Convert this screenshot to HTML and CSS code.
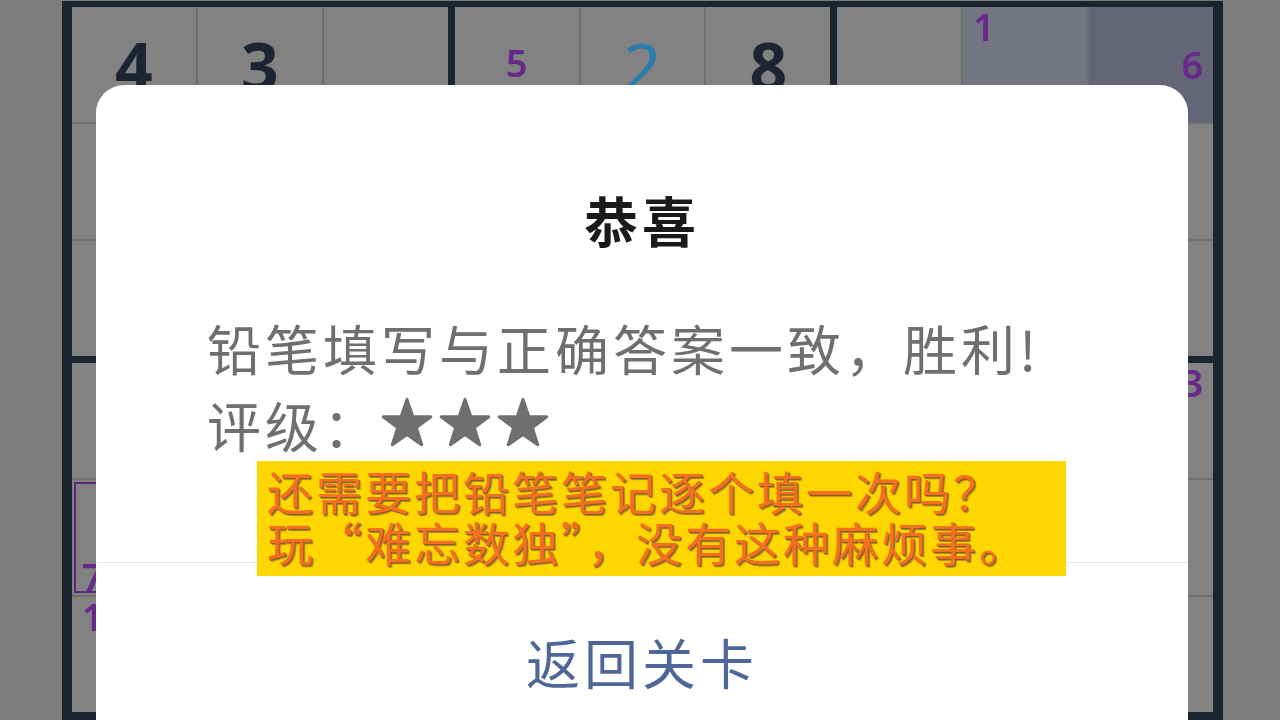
FILE: index.html
```html
<!DOCTYPE html>
<html lang="zh-CN">
<head>
    <meta charset="utf-8">
    <title>恭喜</title>
    <link rel="stylesheet" href="styles.css">
</head>
<body>
    <div class="board">
        <!-- 第一行宫 -->
        <div class="box">
            <div class="cell"><span class="num">4</span></div>
            <div class="cell"><span class="num">3</span></div>
            <div class="cell"></div>
            <div class="cell"></div>
            <div class="cell"></div>
            <div class="cell"></div>
            <div class="cell"></div>
            <div class="cell"></div>
            <div class="cell"></div>
        </div>
        <div class="box">
            <div class="cell"><div class="pencil"><span class="n5">5</span></div></div>
            <div class="cell"><span class="num user">2</span></div>
            <div class="cell"><span class="num">8</span></div>
            <div class="cell"></div>
            <div class="cell"></div>
            <div class="cell"></div>
            <div class="cell"></div>
            <div class="cell"></div>
            <div class="cell"></div>
        </div>
        <div class="box">
            <div class="cell"></div>
            <div class="cell same"><div class="pencil"><span class="n1">1</span></div></div>
            <div class="cell active"><div class="pencil"><span class="n6">6</span></div></div>
            <div class="cell"></div>
            <div class="cell"></div>
            <div class="cell"></div>
            <div class="cell"></div>
            <div class="cell"></div>
            <div class="cell"></div>
        </div>
        <!-- 第二行宫 -->
        <div class="box">
            <div class="cell"></div>
            <div class="cell"></div>
            <div class="cell"></div>
            <div class="cell marked"><div class="pencil"><span class="n7">7</span></div></div>
            <div class="cell"></div>
            <div class="cell"></div>
            <div class="cell"><div class="pencil"><span class="n1">1</span></div></div>
            <div class="cell"></div>
            <div class="cell"></div>
        </div>
        <div class="box">
            <div class="cell"></div>
            <div class="cell"></div>
            <div class="cell"></div>
            <div class="cell"></div>
            <div class="cell"></div>
            <div class="cell"></div>
            <div class="cell"></div>
            <div class="cell"></div>
            <div class="cell"></div>
        </div>
        <div class="box">
            <div class="cell"></div>
            <div class="cell"></div>
            <div class="cell"><div class="pencil"><span class="n3">3</span></div></div>
            <div class="cell"></div>
            <div class="cell"></div>
            <div class="cell"></div>
            <div class="cell"></div>
            <div class="cell"></div>
            <div class="cell"></div>
        </div>
    </div>

    <div class="dialog">
        <h2 class="dialog-title">恭喜</h2>
        <div class="dialog-body">
            <p class="msg">铅笔填写与正确答案一致，胜利!</p>
            <p class="msg rating">
                <span>评级：</span>
                <span class="stars">
                    <svg class="star" viewBox="0 0 52 50"><polygon points="26,1.5 31.8,18.6 49.8,18.8 35.4,29.6 40.7,46.7 26,36.4 11.3,46.7 16.6,29.6 2.2,18.8 20.2,18.6"/></svg>
                    <svg class="star" viewBox="0 0 52 50"><polygon points="26,1.5 31.8,18.6 49.8,18.8 35.4,29.6 40.7,46.7 26,36.4 11.3,46.7 16.6,29.6 2.2,18.8 20.2,18.6"/></svg>
                    <svg class="star" viewBox="0 0 52 50"><polygon points="26,1.5 31.8,18.6 49.8,18.8 35.4,29.6 40.7,46.7 26,36.4 11.3,46.7 16.6,29.6 2.2,18.8 20.2,18.6"/></svg>
                </span>
            </p>
        </div>
        <div class="dialog-foot">返回关卡</div>
    </div>

    <div class="caption">
        <p>还需要把铅笔笔记逐个填一次吗？</p>
        <p>玩“难忘数独”，没有这种麻烦事。</p>
    </div>
</body>
</html>
```

FILE: styles.css
```css
body, p, h2 {
    margin: 0;
}
body {
    position: relative;
    width: 1280px;
    height: 720px;
    overflow: hidden;
    background: #7d7d7d;
    font-family: "Noto Sans CJK SC", "Noto Sans", sans-serif;
}
.board {
    display: grid;
    grid-template-columns: repeat(3, 1fr);
    gap: 7px;
    width: 1161px;
    margin: 1px 0 0 62px;
    padding: 6px 10px 8px;
    box-sizing: border-box;
    background: #1b2530;
}
.box {
    display: grid;
    grid-template-columns: repeat(3, 1fr);
    grid-template-rows: repeat(3, 115px);
    gap: 2px;
    background: #6f6f6f;
}
.cell {
    display: flex;
    align-items: center;
    justify-content: center;
    background: #828282;
}
.cell.same {
    background: #737580;
}
.cell.active {
    background: #646577;
}
.cell.marked {
    outline: 2px solid #5a2a78;
    outline-offset: -4px;
}
.num {
    font-family: "Noto Sans", sans-serif;
    font-size: 66px;
    font-weight: 700;
    line-height: 1;
    color: #1d2434;
}
.num.user {
    font-weight: 400;
    color: #2b7bad;
}
.pencil {
    display: grid;
    grid-template-columns: repeat(3, 1fr);
    grid-template-rows: repeat(3, 1fr);
    width: 100%;
    height: 100%;
}
.pencil span {
    display: flex;
    align-items: center;
    justify-content: center;
    font-family: "Noto Sans", sans-serif;
    font-size: 38px;
    font-weight: 600;
    line-height: 1;
    color: #67298a;
}
.n1 { grid-area: 1 / 1; }
.n3 { grid-area: 1 / 3; }
.n5 { grid-area: 2 / 2; margin-top: -4px; }
.n6 { grid-area: 2 / 3; }
.n7 { grid-area: 3 / 1; }

.dialog {
    position: absolute;
    left: 96px;
    top: 85px;
    width: 1092px;
    height: 635px;
    background: #fff;
    border-radius: 28px 28px 0 0;
}
.dialog-title {
    padding-top: 100px;
    font-size: 54px;
    font-weight: 700;
    line-height: 70px;
    letter-spacing: 4px;
    text-align: center;
    color: #1a1a1a;
}
.dialog-body {
    margin-top: 54px;
    padding: 0 40px 99px 111px;
}
.msg {
    font-size: 54px;
    line-height: 77px;
    letter-spacing: 4px;
    color: #6f6f6f;
}
.rating {
    display: flex;
    align-items: center;
}
.stars {
    display: flex;
    gap: 6px;
    margin-top: -3px;
}
.star {
    width: 52px;
    height: 50px;
    fill: #6f6f6f;
    stroke: #6f6f6f;
    stroke-width: 3;
    stroke-linejoin: round;
}
.dialog-foot {
    border-top: 1px solid #e6e6e6;
    padding-top: 64px;
    font-size: 54px;
    line-height: 70px;
    letter-spacing: 4px;
    text-align: center;
    color: #4e6698;
}

.caption {
    position: absolute;
    left: 257px;
    top: 461px;
    width: 809px;
    height: 115px;
    padding: 4px 0 0 10px;
    box-sizing: border-box;
    background: #fed600;
}
.caption p {
    font-size: 46px;
    font-weight: 400;
    line-height: 51px;
    letter-spacing: 3px;
    white-space: nowrap;
    color: #f2701e;
    text-shadow: 1px 1px 0 #8a5a30, 2px 2px 1px rgba(110, 80, 50, 0.6);
}
```
